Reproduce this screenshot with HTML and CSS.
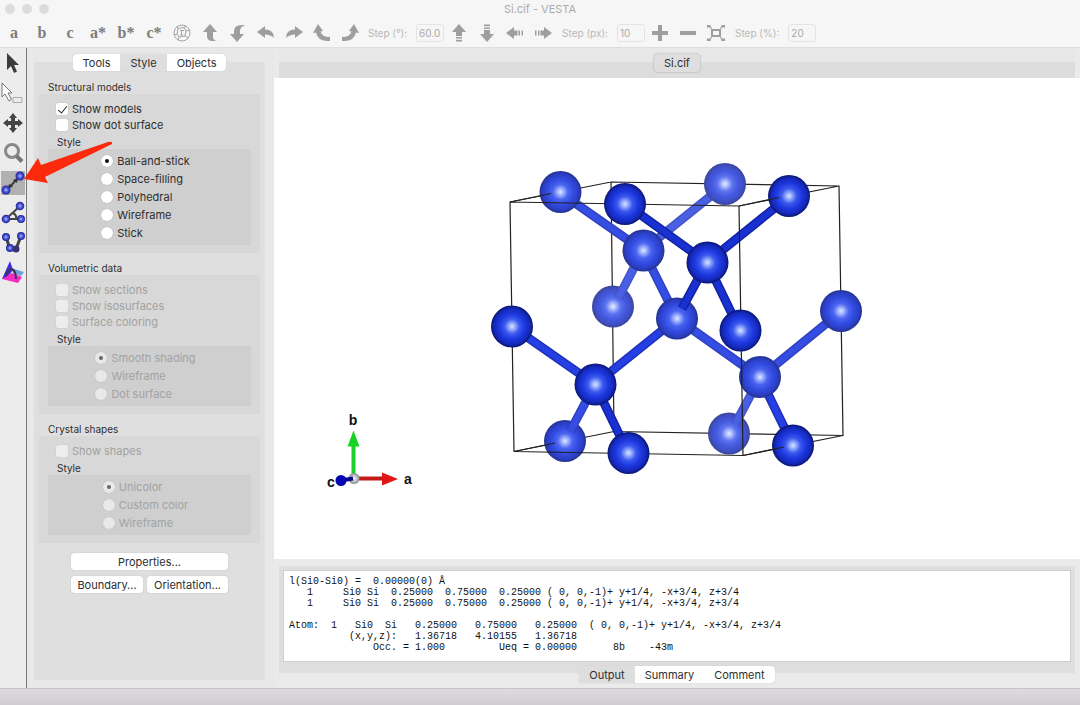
FILE: index.html
```html
<!DOCTYPE html>
<html lang="en">
<head>
<meta charset="utf-8">
<meta name="viewport" content="width=device-width, initial-scale=1">
<title>Si.cif - VESTA</title>
<link rel="stylesheet" href="styles.css">
</head>
<body>
<div class="window">
  <header class="header">
    <div class="titlebar">
      <div class="lights"><span class="light"></span><span class="light"></span><span class="light"></span></div>
      <h1 class="title">Si.cif - VESTA</h1>
    </div>
    <div class="toolbar" role="toolbar" aria-label="View">
      <div class="tool-group">
        <button class="tb axis">a</button>
        <button class="tb axis">b</button>
        <button class="tb axis">c</button>
        <button class="tb axis">a*</button>
        <button class="tb axis">b*</button>
        <button class="tb axis">c*</button>
        <button class="tb" aria-label="Standard orientation"><svg class="ico" viewBox="0 0 20 20" fill="none" stroke="#a4a4a4" stroke-width="1"><circle cx="10" cy="10" r="8"/><path d="M6 5.500 12 4.500 14 8 13 13 7 14 5 11ZM6 5.500 5 2.800M12 4.500 14 3M14 8 17.500 7M13 13 16.500 15M7 14 6 17M5 11 2 12M8 7.500h4M8 12h3M9.500 7.500v4.500"/></svg></button>
        <button class="tb" aria-label="Rotate up"><svg class="ico" viewBox="0 0 20 20"><path d="M10 1 17 9H13V14Q13 17 17 18H11Q7 17 7 13V9H3Z"/></svg></button>
        <button class="tb" aria-label="Rotate down"><svg class="ico" viewBox="0 0 20 20"><path d="M9 19 2 11H6V8Q6 2 14 2H17Q12 4 12 8V11H16Z"/></svg></button>
        <button class="tb" aria-label="Rotate left"><svg class="ico" viewBox="0 0 20 20"><path d="M1 9 9 3V6.500Q18 6.500 18 15Q15 11.500 9 11.500V15Z"/></svg></button>
        <button class="tb" aria-label="Rotate right"><svg class="ico" viewBox="0 0 20 20"><path d="M19 9 11 3V6.500Q2 6.500 2 15Q5 11.500 11 11.500V15Z"/></svg></button>
        <button class="tb" aria-label="Rotate counterclockwise"><svg class="ico" viewBox="0 0 20 20"><path d="M6 1 11 8 8.500 8.500Q10 14 18 14V18Q6 19 4 9.500L1 10Z"/></svg></button>
        <button class="tb" aria-label="Rotate clockwise"><svg class="ico" viewBox="0 0 20 20"><path d="M14 1 9 8 11.500 8.500Q10 14 2 14V18Q14 19 16 9.500L19 10Z"/></svg></button>
      </div>
      <label class="step" for="step-deg">Step (°):</label>
      <input class="step-input" id="step-deg" value="60.0">
      <div class="tool-group">
        <button class="tb" aria-label="Move up"><svg class="ico" viewBox="0 0 20 20"><path d="M10 1 17 9H3ZM7 9h6v4H7ZM7 14h6v1.500H7ZM7 16.800h6v1.700H7Z"/></svg></button>
        <button class="tb" aria-label="Move down"><svg class="ico" viewBox="0 0 20 20"><path d="M10 19 17 11H3ZM7 11h6V7H7ZM7 6h6V4.500H7ZM7 3.200h6V1.500H7Z"/></svg></button>
        <button class="tb" aria-label="Move left"><svg class="ico" viewBox="0 0 20 20"><path d="M1 10 9 4V16ZM9 7.500h3.500v5H9ZM13.500 7.500H15v5h-1.500ZM16.500 7.500h1.500v5h-1.500Z"/></svg></button>
        <button class="tb" aria-label="Move right"><svg class="ico" viewBox="0 0 20 20"><path d="M19 10 11 4V16ZM11 7.500H7.500v5H11ZM6.500 7.500H5v5h1.500ZM3.500 7.500H2v5h1.500Z"/></svg></button>
      </div>
      <label class="step" for="step-px">Step (px):</label>
      <input class="step-input" id="step-px" value="10">
      <div class="tool-group">
        <button class="tb" aria-label="Zoom in"><svg class="ico" viewBox="0 0 20 20"><path d="M8 2h4v6h6v4h-6v6H8v-6H2V8h6Z"/></svg></button>
        <button class="tb" aria-label="Zoom out"><svg class="ico" viewBox="0 0 20 20"><path d="M2 8h16v4H2Z"/></svg></button>
        <button class="tb" aria-label="Fit to screen"><svg class="ico" viewBox="0 0 20 20"><path d="M5 6h10v8H5ZM7 8v4h6V8Z" fill-rule="evenodd"/><path d="M1 2h4L4.200 3 6 5 5 6 3 4 1 5ZM19 2h-4l.8 1L14 5l1 1 2-2 2 1ZM1 18h4l-.8-1L6 15l-1-1-2 2-2-1ZM19 18h-4l.8-1L14 15l1-1 2 2 2-1Z"/></svg></button>
      </div>
      <label class="step" for="step-pct">Step (%):</label>
      <input class="step-input" id="step-pct" value="20">
    </div>
  </header>

  <div class="body">
    <nav class="rail" aria-label="Tools">
      <button class="rail-btn" aria-label="Rotate"><svg class="rail-ico" viewBox="0 0 24 24"><path d="M6 2V19L10 15 13 22 16 20.500 13 14H18Z" fill="#3b3b3b"/></svg></button>
      <button class="rail-btn" aria-label="Select"><svg class="rail-ico" viewBox="0 0 24 24"><path d="M1 2V16L4 13 8 20 10.500 18.500 7 12H11Z" fill="#fff" stroke="#777"/><path d="M12 16.500h9v5h-9Z" fill="none" stroke="#aaa"/></svg></button>
      <button class="rail-btn" aria-label="Translate"><svg class="rail-ico" viewBox="0 0 24 24"><path d="M12 2 16 7H14V10H17V8L22 12 17 16V14H14V17H16L12 22 8 17H10V14H7V16L2 12 7 8V10H10V7H8Z" fill="#454545"/></svg></button>
      <button class="rail-btn" aria-label="Magnify"><svg class="rail-ico" viewBox="0 0 24 24" fill="none"><circle cx="11" cy="10" r="6.500" stroke="#888" stroke-width="3"/><path d="M15.500 15 21 20.500" stroke="#777" stroke-width="4"/></svg></button>
      <button class="rail-btn active" aria-label="Distance" aria-pressed="true"><svg class="rail-ico" viewBox="0 0 24 24"><path d="M5 19 19 5" stroke="#777" stroke-width="2"/><path d="M7 17 8 13 10 14 13 10 12 9 17 7 16 12 14.500 11 11 15 12 16Z" fill="#333"/><circle cx="19" cy="5" r="4.500" fill="url(#ball)"/><circle cx="5" cy="19" r="4.500" fill="url(#ball)"/></svg></button>
      <button class="rail-btn" aria-label="Bond angle"><svg class="rail-ico" viewBox="0 0 24 24"><path d="M19 5 5 18H20M12 12Q16 14 15 18" fill="none" stroke="#444" stroke-width="2"/><circle cx="19" cy="5" r="4.300" fill="url(#ball)"/><circle cx="5" cy="18" r="4.300" fill="url(#ball)"/><circle cx="20" cy="18" r="4" fill="url(#ball)"/></svg></button>
      <button class="rail-btn" aria-label="Dihedral angle"><svg class="rail-ico" viewBox="0 0 24 24"><path d="M5 6 9 18H15L20 5" fill="none" stroke="#444" stroke-width="3"/><circle cx="5" cy="6" r="4" fill="url(#ball)"/><circle cx="20" cy="5" r="4" fill="url(#ball)"/><circle cx="9" cy="17" r="4" fill="url(#ball)"/><circle cx="15" cy="18" r="3.500" fill="#343474"/></svg></button>
      <button class="rail-btn" aria-label="Interfacial angle"><svg class="rail-ico" viewBox="0 0 24 24"><path d="M1 18 9 0 12 9 5 18Z" fill="#382be0"/><path d="M10 7 23 11 20 15 12 12Z" fill="#6ba2da"/><path d="M1 18 11 12 21 16 17 22Z" fill="#f22bc2"/><path d="M5 15Q6 9 11 8Q15 10 15 18" fill="none" stroke="#453052" stroke-width="2"/></svg></button>
    </nav>

    <aside class="sidebar">
      <div class="tabs" role="tablist">
        <button class="tab" role="tab">Tools</button>
        <button class="tab selected" role="tab" aria-selected="true">Style</button>
        <button class="tab" role="tab">Objects</button>
      </div>
      <div class="panel">
        <section class="group">
          <h2 class="caption">Structural models</h2>
          <div class="box">
            <label class="check"><input type="checkbox" checked>Show models</label>
            <label class="check"><input type="checkbox">Show dot surface</label>
            <h3 class="caption sub">Style</h3>
            <div class="inner"><div class="radios">
              <label class="radio"><input type="radio" name="model" checked>Ball-and-stick</label>
              <label class="radio"><input type="radio" name="model">Space-filling</label>
              <label class="radio"><input type="radio" name="model">Polyhedral</label>
              <label class="radio"><input type="radio" name="model">Wireframe</label>
              <label class="radio"><input type="radio" name="model">Stick</label>
            </div></div>
          </div>
        </section>
        <section class="group off">
          <h2 class="caption">Volumetric data</h2>
          <div class="box">
            <label class="check"><input type="checkbox" disabled>Show sections</label>
            <label class="check"><input type="checkbox" disabled>Show isosurfaces</label>
            <label class="check"><input type="checkbox" disabled>Surface coloring</label>
            <h3 class="caption sub">Style</h3>
            <div class="inner"><div class="radios">
              <label class="radio"><input type="radio" name="volume" checked disabled>Smooth shading</label>
              <label class="radio"><input type="radio" name="volume" disabled>Wireframe</label>
              <label class="radio"><input type="radio" name="volume" disabled>Dot surface</label>
            </div></div>
          </div>
        </section>
        <section class="group off">
          <h2 class="caption">Crystal shapes</h2>
          <div class="box">
            <label class="check"><input type="checkbox" disabled>Show shapes</label>
            <h3 class="caption sub">Style</h3>
            <div class="inner"><div class="radios">
              <label class="radio"><input type="radio" name="shape" checked disabled>Unicolor</label>
              <label class="radio"><input type="radio" name="shape" disabled>Custom color</label>
              <label class="radio"><input type="radio" name="shape" disabled>Wireframe</label>
            </div></div>
          </div>
        </section>
        <div class="actions">
          <button class="push wide">Properties...</button>
          <button class="push">Boundary...</button>
          <button class="push">Orientation...</button>
        </div>
      </div>
    </aside>

    <main class="main">
      <div class="doc-tabs"><button class="doc-tab">Si.cif</button></div>
      <div class="stage">
        <svg class="scene" viewBox="274 78 806 480" role="img" aria-label="Silicon crystal structure">
          <defs>
            <radialGradient id="ball"><stop offset="0" stop-color="#c3ccff"/><stop offset=".4" stop-color="#5663e0"/><stop offset="1" stop-color="#20209a"/></radialGradient>
            <radialGradient id="near"><stop offset="0" stop-color="#d8e4ff"/><stop offset=".12" stop-color="#a5b9ff"/><stop offset=".36" stop-color="#3b59ee"/><stop offset=".62" stop-color="#1c37df"/><stop offset=".84" stop-color="#1529bc"/><stop offset="1" stop-color="#0a1672"/></radialGradient>
            <radialGradient id="mid"><stop offset="0" stop-color="#dfe9ff"/><stop offset=".12" stop-color="#adbfff"/><stop offset=".36" stop-color="#4b65f0"/><stop offset=".62" stop-color="#324be2"/><stop offset=".84" stop-color="#2b3fc6"/><stop offset="1" stop-color="#25338c"/></radialGradient>
            <radialGradient id="far"><stop offset="0" stop-color="#e6edff"/><stop offset=".12" stop-color="#b7c6ff"/><stop offset=".36" stop-color="#5c73ee"/><stop offset=".62" stop-color="#4459e0"/><stop offset=".84" stop-color="#3f50c6"/><stop offset="1" stop-color="#3a4696"/></radialGradient>
            <radialGradient id="pearl"><stop offset="0" stop-color="#fff"/><stop offset="1" stop-color="#8b8b96"/></radialGradient>
            <path id="bonds-back" d="M643 250 725 184"/>
            <path id="bonds-far" d="M643 250 618 298M760 377 735 424"/>
            <path id="bonds-mid" d="M841 311 760 377M643 250 560 192M643 250 677 318M677 318 760 377"/>
            <path id="bonds-low" d="M595 384 570 431"/>
            <path id="bonds-near" d="M512 326 595 384 677 318M760 377 793 445"/>
            <path id="bonds-front" d="M595 384 628 452M625 203 707 262 789 196M707 262 682 308M707 262 740 330"/>
          </defs>
          <path class="edge" d="M611 181.500 839 185.500 843 435 614 431ZM510 201.500 611 181.500M739 205.500 839 185.500M514 451 614 431M743 455 843 435"/>
          <g class="far"><use href="#bonds-back" class="rim"/><use href="#bonds-back" class="core"/></g>
          <g fill="url(#far)"><circle cx="725" cy="183.500" r="21"/><circle cx="613" cy="306" r="21"/><circle cx="729" cy="433" r="21"/></g>
          <g class="far"><use href="#bonds-far" class="rim"/><use href="#bonds-far" class="core"/></g>
          <g class="mid"><use href="#bonds-mid" class="rim"/><use href="#bonds-mid" class="core"/></g>
          <g fill="url(#mid)"><circle cx="643.500" cy="250" r="21"/><circle cx="841" cy="310.500" r="21"/><circle cx="560.500" cy="191.500" r="21"/><circle cx="565" cy="440.500" r="21"/></g>
          <g class="mid"><use href="#bonds-low" class="rim"/><use href="#bonds-low" class="core"/></g>
          <g class="near"><use href="#bonds-near" class="rim"/><use href="#bonds-near" class="core"/></g>
          <g fill="url(#mid)"><circle cx="677" cy="318" r="21"/><circle cx="760" cy="376.500" r="21"/></g>
          <g class="front"><use href="#bonds-front" class="rim"/><use href="#bonds-front" class="core"/></g>
          <path class="edge" d="M510 201.500 739 205.500 743 455 514 451ZM510 201.500 551 193M514 451 555 442.500"/>
          <g fill="url(#near)"><circle cx="512" cy="326" r="21"/><circle cx="595.500" cy="384" r="21"/><circle cx="789" cy="195.500" r="21"/><circle cx="793" cy="445" r="21"/><circle cx="707.500" cy="262" r="21"/><circle cx="625" cy="203.500" r="21"/><circle cx="740.500" cy="330" r="21"/><circle cx="628.500" cy="452.500" r="21"/></g>
          <path class="edge" d="M743 455 784 446.500M739 205.500 779 197"/>
          <path d="M353.500 478V444" stroke="#1fcf2a" stroke-width="4"/>
          <path d="M353.500 430 359.500 446H347.500Z" fill="#18d422"/>
          <path d="M356 478H384" stroke="#c41a1a" stroke-width="4"/>
          <path d="M398 478.500 382 472V485Z" fill="#df1717"/>
          <circle cx="354" cy="478" r="5.500" fill="url(#pearl)"/>
          <path d="M341 480 353 478" stroke="#0a0a85" stroke-width="4"/>
          <circle cx="341" cy="480" r="5.500" fill="#0505b4"/>
          <g class="axis-name"><text x="353" y="424">b</text><text x="408" y="483">a</text><text x="331" y="486">c</text></g>
        </svg>
      </div>
      <div class="output">
        <pre class="log">l(Si0-Si0) =  0.00000(0) Å
   1     Si0 Si  0.25000  0.75000  0.25000 ( 0, 0,-1)+ y+1/4, -x+3/4, z+3/4
   1     Si0 Si  0.25000  0.75000  0.25000 ( 0, 0,-1)+ y+1/4, -x+3/4, z+3/4

Atom:  1   Si0  Si   0.25000   0.75000   0.25000  ( 0, 0,-1)+ y+1/4, -x+3/4, z+3/4
          (x,y,z):   1.36718   4.10155   1.36718
              Occ. = 1.000         Ueq = 0.00000      8b    -43m</pre>
      </div>
      <div class="tabs bottom" role="tablist">
        <button class="tab selected" role="tab" aria-selected="true">Output</button>
        <button class="tab" role="tab">Summary</button>
        <button class="tab" role="tab">Comment</button>
      </div>
    </main>
  </div>
  <footer class="status"></footer>
  <svg class="pointer" viewBox="0 0 90 44" aria-hidden="true"><path d="M1 39 15 18 18 25 85 2Q90 1 89 4L22 37 25 43Z" fill="#fb2a0c"/></svg>
</div>
</body>
</html>
```

FILE: styles.css
```css
* { box-sizing: border-box; }

body {
  margin: 0;
  font-family: Inter, "Liberation Sans", sans-serif;
  font-size: 11px;
  color: #2e2e2e;
  background: #e8e8e8;
}

button, input {
  font: inherit;
  color: inherit;
  margin: 0;
  padding: 0;
  border: 0;
  background: none;
}

h1, h2, h3, pre { margin: 0; font-weight: 400; }

.window {
  position: relative;
  display: flex;
  flex-direction: column;
  min-height: 100vh;
}

.header { background: #f6f6f6; border-bottom: 1px solid #dedede; }

.titlebar {
  display: grid;
  grid-template-columns: 1fr auto 1fr;
  align-items: center;
  height: 18px;
}

.lights { display: flex; gap: 7px; padding-left: 5px; }
.light { width: 10px; height: 10px; border-radius: 50%; background: #dcdcdc; }
.title { font-size: 11px; color: #acacac; }

.toolbar { display: flex; align-items: center; height: 29px; }
.tool-group { display: flex; flex: none; }
.tb { width: 28px; height: 24px; display: grid; place-items: center; }
.axis { font: bold 16px "Liberation Serif", serif; color: #7d7d7d; }
.ico { width: 20px; height: 20px; fill: #9e9e9e; }
.ico[fill="none"] { fill: none; }

.step { padding: 0 9px 0 4px; font-size: 10px; color: #b8b8b8; white-space: nowrap; }
.step-input {
  width: 28px;
  height: 18px;
  padding-left: 2px;
  font-size: 10px;
  color: #aaa;
  border: 1px solid #e4e4e4;
  border-radius: 3px;
}
.step-input + .tool-group { margin: 0 1px; }

.body { display: flex; flex: 1; }

.rail {
  flex: none;
  width: 27px;
  border-right: 1px solid #777;
  background: #ececec;
}
.rail-btn { display: grid; place-items: center; width: 26px; height: 30px; }
.rail-ico { width: 24px; height: 24px; }
.active .rail-ico { background: #b1b1b1; }

.sidebar { flex: none; width: 247px; padding: 6px 9px 8px 7px; display: flex; flex-direction: column; }

.tabs {
  display: flex;
  align-self: center;
  z-index: 1;
  border-radius: 4px;
  background: #fff;
  box-shadow: 0 0 1px #aaa;
}
.tab { height: 17px; padding: 0 10px; }
.tab.selected { background: #dedede; }

.panel { flex: 1; margin-top: -9px; padding: 10px 5px; background: #dfdfdf; }
.group { padding-top: 8px; }
.caption { padding-left: 9px; font-size: 10px; line-height: 14px; }
.caption.sub { margin-top: 2px; }
.box { padding: 7px 9px 8px; background: #d8d8d8; }
.check, .radio { display: flex; align-items: center; gap: 4px; }
.check { height: 16px; padding-left: 8px; }
.inner { padding: 3px 8px 3px 0; display: flex; justify-content: center; background: #cfcfcf; }
.radio { height: 18px; }
.off label { color: #a2a2a2; }

input[type="checkbox"], input[type="radio"] {
  appearance: none;
  display: grid;
  place-items: center;
  width: 12px;
  height: 12px;
  background: #fff;
  border-radius: 2px;
  box-shadow: 0 0 1px #999;
}
input[type="radio"] { border-radius: 50%; }
input[type="radio"]:checked::before {
  content: "";
  width: 4px;
  height: 4px;
  border-radius: 50%;
  background: #111;
}
input[type="checkbox"]:checked::before {
  content: "";
  width: 4px;
  height: 8px;
  margin-bottom: 2px;
  border: solid #222;
  border-width: 0 1px 1px 0;
  transform: rotate(38deg);
}
.off input { opacity: .55; }

.actions {
  display: grid;
  grid-template-columns: 72px 81px;
  justify-content: center;
  gap: 6px 4px;
  padding-top: 10px;
}
.push { height: 17px; border-radius: 3px; background: #fff; box-shadow: 0 0 1px #999; white-space: nowrap; }
.wide { grid-column: 1 / -1; }

.main { flex: 1; min-width: 0; display: flex; flex-direction: column; background: #eaeaea; padding-bottom: 5px; }

.doc-tabs {
  display: flex;
  justify-content: center;
  align-items: center;
  height: 30px;
  padding: 0 5px;
  background: linear-gradient(#e8e8e8 14px, #dddddd 14px) content-box;
}
.doc-tab {
  height: 18px;
  padding: 0 10px;
  border-radius: 4px;
  background: #dedede;
  box-shadow: 0 0 2px #999;
}

.stage { flex: 1; display: flex; background: #fff; }
.scene { width: 100%; height: auto; }

.edge { fill: none; stroke: #222; stroke-width: 1.2; }
.rim { fill: none; stroke-width: 9; }
.core { fill: none; stroke-width: 6; }
.far .rim { stroke: #4354c8; }
.far .core { stroke: #4a5fe4; }
.mid .rim { stroke: #2f42c4; }
.mid .core { stroke: #354de2; }
.near .rim { stroke: #1e31bc; }
.near .core { stroke: #263fe2; }
.front .rim { stroke: #1323a8; }
.front .core { stroke: #1a31d2; }
.axis-name { font: bold 14px "Liberation Sans", sans-serif; text-anchor: middle; fill: #111; }

.output { margin: 7px 5px 0; padding: 4px 4px 11px; background: #dedede; }
.log {
  min-height: 92px;
  padding: 5px;
  border: 1px solid #cfcfcf;
  background: #fff;
  font: 10px/11px "Liberation Mono", monospace;
  color: #111;
  overflow: hidden;
}
.bottom { margin-top: -7px; }

.status { height: 17px; border-top: 1px solid #c4c4c8; background: linear-gradient(#dddbdd, #cfcdd0); }

.pointer { position: absolute; left: 23px; top: 140px; width: 90px; height: 44px; pointer-events: none; z-index: 2; }
```
